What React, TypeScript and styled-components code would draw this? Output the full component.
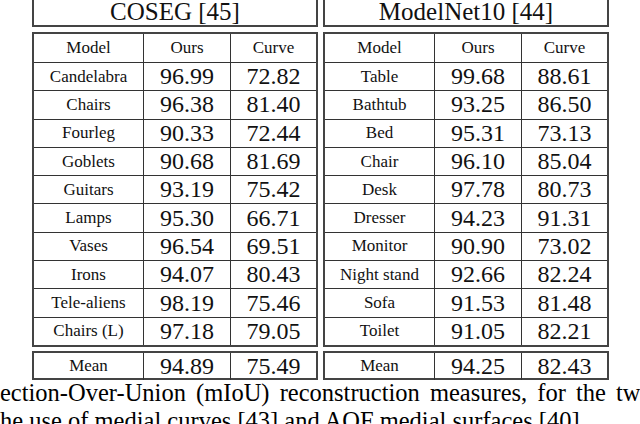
import React from "react";
import styled, { createGlobalStyle } from "styled-components";

const Global = createGlobalStyle`
  html, body { margin: 0; padding: 0; background: #fff; }
  body { font-family: "Liberation Serif", "Times New Roman", serif; color: #111; overflow: hidden; }
`;

const Page = styled.div`
  width: 640px;
  height: 424px;
  overflow: hidden;
  display: flex;
  flex-direction: column;
`;

const Tables = styled.div`
  display: flex;
  gap: 5px;
  margin-top: -8px;
  padding-left: 32px;
`;

const Side = styled.div`
  width: 286px;
  display: flex;
  flex-direction: column;
  gap: 5px;
`;

const TitleBox = styled.div`
  border: 2px solid #444;
  height: 31px;
  line-height: 35px;
  text-align: center;
  font-size: 25px;
  overflow: hidden;
`;

const Box = styled.div<{ $gapAfter?: number }>`
  border: 2px solid #444;
  display: flex;
  flex-direction: column;
  margin-bottom: ${(p) => (p.$gapAfter ? p.$gapAfter - 5 : 0)}px;
`;

const Row = styled.div<{ $h: number }>`
  display: grid;
  grid-template-columns: 109px 87px 1fr;
  height: ${(p) => p.$h}px;
  box-sizing: border-box;
  & + & {
    border-top: 1px solid #333;
  }
`;

const Cell = styled.div<{ $num?: boolean }>`
  display: flex;
  align-items: center;
  justify-content: center;
  white-space: nowrap;
  font-size: ${(p) => (p.$num ? 24 : 17)}px;
  & + & {
    border-left: 1px solid #333;
  }
`;

const Caption = styled.div`
  margin-top: -1px;
  font-size: 24.5px;
  line-height: 28px;
  color: #000;
`;

const CapLine = styled.div<{ $ws?: number; $shift?: number }>`
  white-space: nowrap;
  word-spacing: ${(p) => p.$ws ?? 0}px;
  margin-left: ${(p) => p.$shift ?? 0}px;
`;

type Item = [string, string, string];

const coseg: Item[] = [
  ["Candelabra", "96.99", "72.82"],
  ["Chairs", "96.38", "81.40"],
  ["Fourleg", "90.33", "72.44"],
  ["Goblets", "90.68", "81.69"],
  ["Guitars", "93.19", "75.42"],
  ["Lamps", "95.30", "66.71"],
  ["Vases", "96.54", "69.51"],
  ["Irons", "94.07", "80.43"],
  ["Tele-aliens", "98.19", "75.46"],
  ["Chairs (L)", "97.18", "79.05"],
];

const modelnet: Item[] = [
  ["Table", "99.68", "88.61"],
  ["Bathtub", "93.25", "86.50"],
  ["Bed", "95.31", "73.13"],
  ["Chair", "96.10", "85.04"],
  ["Desk", "97.78", "80.73"],
  ["Dresser", "94.23", "91.31"],
  ["Monitor", "90.90", "73.02"],
  ["Night stand", "92.66", "82.24"],
  ["Sofa", "91.53", "81.48"],
  ["Toilet", "91.05", "82.21"],
];

function ResultTable({ title, rows, mean }: { title: string; rows: Item[]; mean: [string, string] }) {
  return (
    <Side>
      <TitleBox>{title}</TitleBox>
      <Box $gapAfter={4}>
        <Row $h={28}>
          <Cell>Model</Cell>
          <Cell>Ours</Cell>
          <Cell>Curve</Cell>
        </Row>
        {rows.map((r) => (
          <Row $h={28.3} key={r[0]}>
            <Cell>{r[0]}</Cell>
            <Cell $num>{r[1]}</Cell>
            <Cell $num>{r[2]}</Cell>
          </Row>
        ))}
      </Box>
      <Box>
        <Row $h={25}>
          <Cell>Mean</Cell>
          <Cell $num>{mean[0]}</Cell>
          <Cell $num>{mean[1]}</Cell>
        </Row>
      </Box>
    </Side>
  );
}

export default function App() {
  return (
    <Page>
      <Global />
      <Tables>
        <ResultTable title="COSEG [45]" rows={coseg} mean={["94.89", "75.49"]} />
        <ResultTable title="ModelNet10 [44]" rows={modelnet} mean={["94.25", "82.43"]} />
      </Tables>
      <Caption>
        <CapLine $ws={4}>ection-Over-Union (mIoU) reconstruction measures, for the two</CapLine>
        <CapLine>he use of medial curves [43] and AOF medial surfaces [40].</CapLine>
      </Caption>
    </Page>
  );
}
